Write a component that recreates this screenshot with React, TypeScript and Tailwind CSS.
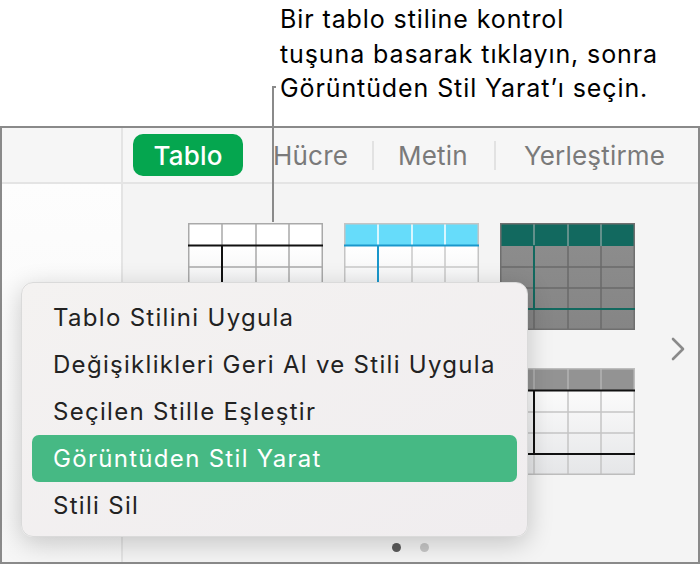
import { useId } from "react";

type ThumbStyle = {
  head: string;
  headDiv: string;
  bodyTop: string;
  bodyBottom: string;
  line: string;
  edge: string;
  accent: string;
  underHead?: boolean;
  lastRule?: boolean;
  colRuleEnd: number;
};

const thumbs: ThumbStyle[] = [
  { head: "#ffffff", headDiv: "#a9a9a9", bodyTop: "#ffffff", bodyBottom: "#e4e5e7", line: "#a9a9a9", edge: "#a9a9a9", accent: "#111111", underHead: true, colRuleEnd: 107 },
  { head: "#66dcfa", headDiv: "#ffffff", bodyTop: "#ffffff", bodyBottom: "#e6e7e9", line: "#c8c8c8", edge: "#c4c4c4", accent: "#1a97cb", underHead: true, colRuleEnd: 107 },
  { head: "#12695f", headDiv: "#7f9e9a", bodyTop: "#8c8c8c", bodyBottom: "#858585", line: "#6a6a6a", edge: "#6f6f6f", accent: "#12695f", lastRule: true, colRuleEnd: 86 },
  { head: "#ffffff", headDiv: "#bdbdbd", bodyTop: "#ffffff", bodyBottom: "#e6e6e6", line: "#c4c4c4", edge: "#c4c4c4", accent: "#111111", underHead: true, colRuleEnd: 107 },
  { head: "#ffffff", headDiv: "#c4c4c4", bodyTop: "#ffffff", bodyBottom: "#e6e6e6", line: "#c4c4c4", edge: "#c4c4c4", accent: "#111111", underHead: true, colRuleEnd: 107 },
  { head: "#939393", headDiv: "#b3b3b3", bodyTop: "#fbfbfb", bodyBottom: "#e5e6e8", line: "#c4c4c4", edge: "#bdbdbd", accent: "#111111", underHead: true, lastRule: true, colRuleEnd: 86 },
];

function TableThumb({ s }: { s: ThumbStyle }) {
  const gid = useId();
  const cols = [34, 68, 101];
  const rows = [44, 65, 86];
  return (
    <svg width="135" height="107" viewBox="0 0 135 107">
      <defs>
        <linearGradient id={gid} x1="0" y1="0" x2="0" y2="1">
          <stop offset="0" stopColor={s.bodyTop} />
          <stop offset="1" stopColor={s.bodyBottom} />
        </linearGradient>
      </defs>
      <rect x="0" y="23" width="135" height="84" fill={`url(#${gid})`} />
      <rect x="0" y="0" width="135" height="23" fill={s.head} />
      {cols.map((x) => (
        <line key={"h" + x} x1={x} x2={x} y1={0} y2={23} stroke={s.headDiv} strokeWidth="1.5" />
      ))}
      {cols.map((x) => (
        <line key={"v" + x} x1={x} x2={x} y1={23} y2={107} stroke={s.line} strokeWidth="1.5" />
      ))}
      {rows.map((y) => (
        <line key={"r" + y} x1={0} x2={135} y1={y} y2={y} stroke={s.line} strokeWidth="1.5" />
      ))}
      <rect x="0.75" y="0.75" width="133.5" height="105.5" fill="none" stroke={s.edge} strokeWidth="1.5" />
      {s.underHead && <line x1="0" x2="135" y1="22.5" y2="22.5" stroke={s.accent} strokeWidth="2" />}
      <line x1="34" x2="34" y1="22" y2={s.colRuleEnd} stroke={s.accent} strokeWidth="2" />
      {s.lastRule && <line x1="0" x2="135" y1="86" y2="86" stroke={s.accent} strokeWidth="2" />}
    </svg>
  );
}

const menuItems = [
  "Tablo Stilini Uygula",
  "Değişiklikleri Geri Al ve Stili Uygula",
  "Seçilen Stille Eşleştir",
  "Görüntüden Stil Yarat",
  "Stili Sil",
];

function ContextMenu() {
  return (
    <div className="absolute left-[21px] top-[282px] w-[507px] h-[255px] rounded-[12px] bg-gradient-to-br from-[#f4f2f1] to-[#f0edef] border border-[#dadada] shadow-[0_6px_26px_rgba(0,0,0,0.2)] px-[10px] pt-[11px]">
      {menuItems.map((item, i) => (
        <div
          key={item}
          className={
            i === 3
              ? "h-[47px] rounded-[7px] bg-[#46b984] pl-[21px] flex items-center text-[24px] tracking-[1.3px] text-white"
              : "h-[47px] pl-[21px] flex items-center text-[24px] tracking-[1.3px] text-[#222222]"
          }
        >
          {item}
        </div>
      ))}
    </div>
  );
}

function Toolbar() {
  return (
    <div className="h-[56px] flex items-center border-b-2 border-[#e4e4e4] bg-[#f6f6f6] text-[26px] tracking-[0.2px] text-[#7a7a7a]">
      <div className="ml-[10px] w-[110px] h-[42px] rounded-[10px] bg-[#05a64f] text-white font-medium flex items-center justify-center">
        Tablo
      </div>
      <span className="ml-[30px]">Hücre</span>
      <span className="ml-[24px] w-[2px] h-[29px] bg-[#e2e2e2]" />
      <span className="ml-[24px]">Metin</span>
      <span className="ml-[26px] w-[2px] h-[29px] bg-[#e2e2e2]" />
      <span className="ml-[28px]">Yerleştirme</span>
    </div>
  );
}

export default function App() {
  return (
    <div className="relative w-[700px] h-[567px] bg-white overflow-hidden font-['Inter',sans-serif]">
      <div className="h-[126px] pl-[280px] pt-[2px] text-[25px] leading-[34.5px] tracking-[0.9px] text-black">
        Bir tablo stiline kontrol
        <br />
        tuşuna basarak tıklayın, sonra
        <br />
        Görüntüden Stil Yarat’ı seçin.
      </div>

      <div className="h-[438px] border-2 border-[#8a8a8a] flex">
        <div className="w-[121px] flex flex-col border-r-2 border-[#e4e4e4]">
          <div className="h-[56px] bg-[#f6f6f6] border-b-2 border-[#e4e4e4]" />
          <div className="flex-1 bg-gradient-to-b from-[#fdfdfd] to-[#f6f6f6]" />
        </div>
        <div className="flex-1 flex flex-col bg-[#f4f4f4]">
          <Toolbar />
          <div className="flex-1 flex flex-col">
            <div className="flex">
              <div className="pl-[65px] pt-[39px] grid grid-cols-[135px_135px_135px] gap-x-[21px] gap-y-[38px]">
                {thumbs.map((t, i) => (
                  <TableThumb key={i} s={t} />
                ))}
              </div>
              <div className="ml-auto mr-[12px] mt-[153px]">
                <svg width="16" height="24" viewBox="0 0 16 24">
                  <polyline points="3,2 13,12 3,22" fill="none" stroke="#8a8a8a" strokeWidth="2.6" strokeLinecap="round" strokeLinejoin="round" />
                </svg>
              </div>
            </div>
            <div className="mt-auto mb-[10px] flex justify-center gap-[19px]">
              <span className="w-[9px] h-[9px] rounded-full bg-[#5b5b5b]" />
              <span className="w-[9px] h-[9px] rounded-full bg-[#c6c6c6]" />
            </div>
          </div>
        </div>
      </div>

      <div className="absolute left-[272px] top-[86px] w-[2px] h-[136px] bg-[#8a8a8a]" />
      <div className="absolute left-[272px] top-[86px] w-[4px] h-[2px] bg-[#8a8a8a]" />

      <ContextMenu />
    </div>
  );
}
